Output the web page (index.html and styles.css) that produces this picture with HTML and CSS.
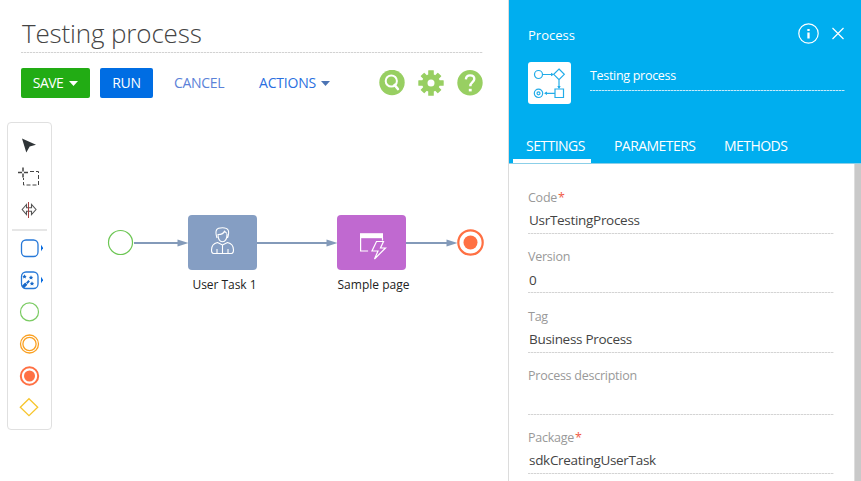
FILE: index.html
```
<!DOCTYPE html>
<html lang="en">
<head>
<meta charset="utf-8">
<title>Testing process</title>
<link rel="stylesheet" href="styles.css">
</head>
<body>
<div class="app">
  <main class="designer">
    <header class="designer-head">
      <h1 class="title">Testing process</h1>
      <div class="actions">
        <button class="btn btn-save"><span>SAVE</span><svg width="9" height="5" viewBox="0 0 9 5"><path d="M0 0h9L4.5 5z" fill="#fff"/></svg></button>
        <button class="btn btn-run"><span>RUN</span></button>
        <button class="btn btn-cancel"><span>CANCEL</span></button>
        <button class="btn btn-actions"><span>ACTIONS</span><svg width="9" height="5" viewBox="0 0 9 5"><path d="M0 0h9L4.5 5z" fill="#4c74b4"/></svg></button>
        <div class="tools">
          <svg width="26" height="26" viewBox="0 0 26 26"><circle cx="13" cy="12.500" r="12.700" fill="#98cf62"/><circle cx="12.300" cy="11" r="5.600" fill="none" stroke="#fff" stroke-width="2"/><path d="M15.600 15l3.300 4" stroke="#fff" stroke-width="2.600" stroke-linecap="round"/></svg>
          <svg width="26" height="26" viewBox="0 0 26 26"><g fill="#98cf62"><circle cx="13" cy="13" r="9"/><g id="teeth"><rect x="10.200" y=".3" width="5.600" height="25.400" rx=".5"/><rect x=".3" y="10.200" width="25.400" height="5.600" rx=".5"/></g><g transform="rotate(45 13 13)"><rect x="10.400" y=".8" width="5.200" height="24.400" rx=".5"/><rect x=".8" y="10.400" width="24.400" height="5.200" rx=".5"/></g></g><circle cx="13" cy="13" r="3.500" fill="#fff"/></svg>
          <svg width="26" height="26" viewBox="0 0 26 26"><circle cx="13" cy="12.800" r="12.700" fill="#98cf62"/><path d="M8.900 9.300c.2-2.600 1.900-3.900 4.200-3.900 2.500 0 4.200 1.400 4.200 3.600 0 3.200-4 3.200-4 7.200" fill="none" stroke="#fff" stroke-width="2.400"/><rect x="11.800" y="18.800" width="2.900" height="2.600" fill="#fff"/></svg>
        </div>
      </div>
    </header>
    <div class="workspace">
      <aside class="palette">
        <svg width="26" height="32" viewBox="0 0 26 32"><path d="M5 8.500l14 6.200-6.300 1.800-3.400 6z" fill="#2f3437"/></svg>
        <svg width="26" height="32" viewBox="0 0 26 32"><path d="M1 10.500h4m2 0h4M6 5.500v4m0 2v4" stroke="#444" stroke-width="1.500"/><path d="M13 9.500h8.500v13.500h-15V16" fill="none" stroke="#444" stroke-dasharray="4 2"/></svg>
        <svg width="26" height="32" viewBox="0 0 26 32"><path d="M9.500 10.500L5.200 15.500l4.300 5v-3.300h5v3.300l4.500-5-4.500-5v3.300h-5z" fill="none" stroke="#555" stroke-width="1.100"/><path d="M11.500 8v16" stroke="#a34040"/></svg>
        <i class="divider"></i>
        <svg width="26" height="32" viewBox="0 0 26 32"><rect x="4.500" y="8" width="16.500" height="16.500" rx="4.500" fill="none" stroke="#2678d8" stroke-width="1.300"/><path d="M24 12.800l2.200 3.200-2.200 3.200z" fill="#066be0"/></svg>
        <svg width="26" height="32" viewBox="0 0 26 32"><rect x="4.500" y="8" width="16.500" height="16.500" rx="4.500" fill="none" stroke="#2678d8" stroke-width="1.300"/><path d="M5.800 23.200l3.500-3.500" stroke="#1868c8" stroke-width="3.200"/><path d="M9.800 19.200L12.200 16.800" stroke="#1868c8" stroke-width="2"/><g fill="#1868c8"><path id="star" d="M7.500 10.200l.7 1.500 1.500.2-1.100 1.200.3 1.500-1.400-.8-1.400.8.3-1.500-1.100-1.200 1.500-.2z"/><use href="#star" x="6.500" y="1"/><use href="#star" x="7.500" y="7"/></g><path d="M24 12.800l2.200 3.200-2.200 3.200z" fill="#066be0"/></svg>
        <svg width="26" height="32" viewBox="0 0 26 32"><circle cx="12.500" cy="15.900" r="9" fill="#fff" stroke="#7bcb63" stroke-width="1.200"/></svg>
        <svg width="26" height="32" viewBox="0 0 26 32"><g fill="none" stroke="#faa021" stroke-width="1.300"><circle cx="12.500" cy="16" r="9"/><circle cx="12.500" cy="16" r="6.600"/></g></svg>
        <svg width="26" height="32" viewBox="0 0 26 32"><circle cx="12.500" cy="16" r="8.700" fill="#fff" stroke="#ff7043" stroke-width="2"/><circle cx="12.500" cy="16" r="5.500" fill="#ff7043"/></svg>
        <svg width="26" height="32" viewBox="0 0 26 32"><path d="M12 6.700l8.700 8.500-8.700 8.500-8.700-8.500z" fill="none" stroke="#f7c52d" stroke-width="1.300"/></svg>
      </aside>
      <svg class="diagram" width="400" height="100" viewBox="100 200 400 100">
        <g stroke="#839ab9" stroke-width="2"><path d="M134 243h44M257 243h70M406 243h41"/></g>
        <g fill="#839ab9"><path d="M177.500 239.500l11 3.500-11 3.500zM326.500 239.500l11 3.500-11 3.500zM446.500 239.500l11 3.500-11 3.500z"/></g>
        <circle cx="120.500" cy="242.500" r="12" fill="#fff" stroke="#6cc653" stroke-width="1.200"/>
        <rect x="188" y="215" width="69" height="55" rx="4" fill="#859ec3"/>
        <g fill="none" stroke="#fff" stroke-width="1.100" stroke-linejoin="round">
          <path d="M217 238c-2.500-8-.5-10.200 5.500-10.200s7.500 3.200 5 10.200M218 234.500c4 0 6-1.500 6.500-3.500 1 1.500 2 2 2.600 2.500M218 234c0 5 1.500 7.700 4.400 7.700s4.600-2.700 4.600-7.700"/>
          <path d="M217.500 242.500c-4.500 1-6 3-6 7.500 0 2.500.5 3.500 2 3.500h18c1.500 0 2-1 2-3.500 0-4.500-1.500-6.500-6-7.500l-5 2.500zM222.500 245v8.500M217 249v4.500M228 249v4.500"/>
        </g>
        <rect x="337" y="215" width="69" height="55" rx="4" fill="#c069d0"/>
        <path d="M360 233.200h23v5h-23z" fill="#fff"/>
        <path d="M360.600 238v13h7.500M382.500 238v2.500" fill="none" stroke="#fff" stroke-width="1.200"/>
        <path d="M376.500 241.500h7l-3 6.500h5l-11 11 3.500-8h-6z" fill="#c069d0" stroke="#fff" stroke-width="1.200"/>
        <circle cx="470.500" cy="242.500" r="12.200" fill="#fff" stroke="#ff7043" stroke-width="2.200"/>
        <circle cx="470.500" cy="242.500" r="7" fill="#ff7043"/>
        <text x="192.500" y="289" textLength="64" class="node-label">User Task 1</text>
        <text x="337.500" y="289" textLength="72" class="node-label">Sample page</text>
      </svg>
    </div>
  </main>
  <section class="panel">
    <header class="panel-head">
      <div class="panel-top">
        <span class="panel-type">Process</span>
        <svg width="46" height="22" viewBox="0 0 46 22" fill="none" stroke="#fff" stroke-width="1.200"><circle cx="10.500" cy="10.500" r="9.700"/><path d="M10.500 9.500v6M10.500 6v2" stroke-width="2.300"/><path d="M34.500 5l11 11M45.500 5l-11 11"/></svg>
      </div>
      <div class="panel-name">
        <div class="process-icon"><svg width="43" height="42" viewBox="0 0 43 42" fill="none" stroke="#22ace8" stroke-width="1.200"><circle cx="10.500" cy="12.500" r="4"/><path d="M15 12.500h10M31 7l5.300 5.300-5.300 5.300-5.300-5.300zM31 18v8M27 27h8.500v8.500H27zM27 31.300H17"/><circle cx="10.500" cy="31.300" r="4.200"/><circle cx="10.500" cy="31.300" r="1.500"/><path d="M23 10.800l3 1.700-3 1.700zM29.300 24l1.700 3 1.700-3zM19 29.600l-3 1.700 3 1.700z" fill="#22ace8" stroke="none"/></svg></div>
        <div class="process-name">Testing process</div>
      </div>
      <nav class="tabs"><span class="tab active">SETTINGS</span><span class="tab tab-params">PARAMETERS</span><span class="tab tab-methods">METHODS</span></nav>
    </header>
    <div class="panel-body">
      <form class="fields">
        <div class="field f-code"><label>Code<b>*</b></label><span class="value">UsrTestingProcess</span></div>
        <div class="field f-version"><label>Version</label><span class="value">0</span></div>
        <div class="field f-tag"><label>Tag</label><span class="value">Business Process</span></div>
        <div class="field f-desc"><label>Process description</label><span class="value"></span></div>
        <div class="field f-package"><label>Package<b>*</b></label><span class="value">sdkCreatingUserTask</span></div>
      </form>
      <div class="scrollbar"></div>
    </div>
  </section>
</div>
</body>
</html>
```
FILE: styles.css
```
* { box-sizing: border-box; }
body { margin: 0; background: #fff; font-family: "Open Sans", sans-serif; font-size: 13px; color: #444; }
svg { display: block; flex: none; }
.app { display: flex; width: 861px; height: 481px; overflow: hidden; }

.designer { width: 508px; flex: none; display: flex; flex-direction: column; }
.designer-head { height: 122px; padding: 15px 25px 0 21px; }
.title { margin: 0; height: 38px; line-height: 36px; font-size: 26px; font-weight: 300; padding-left: 1px; color: #444; letter-spacing: -0.15px;
  background: repeating-linear-gradient(90deg, #d2d2d2 0 2px, #f2f2f2 2px 3px) left bottom / 100% 1px no-repeat; }
.actions { display: flex; align-items: center; margin-top: 15px; height: 30px; }
.btn { height: 30px; border: 0; padding: 0; margin: 0; border-radius: 2px; background: none; font: 14px "Open Sans", sans-serif;
  display: flex; align-items: center; justify-content: center; white-space: nowrap; letter-spacing: -0.3px; }
.btn span { padding-bottom: 2px; }
.btn-save { width: 69px; background: #22ac14; color: #fff; gap: 6px; letter-spacing: -0.6px; }
.btn-run { width: 53px; margin-left: 10px; background: #006de3; color: #fff; }
.btn-cancel { width: 52px; margin-left: 21px; color: #5b82d8; justify-content: flex-start; }
.btn-actions { width: 73px; margin-left: 33px; gap: 5px; color: #2a6fe0; letter-spacing: -0.2px; justify-content: flex-start; }
.tools { display: flex; gap: 13px; margin-left: auto; }

.workspace { flex: 1; display: flex; align-items: flex-start; }
.palette { width: 45px; height: 308px; margin-left: 7px; padding: 7px 0 0 9px; border: 1px solid #e0e0e0; border-radius: 4px; flex: none; }
.divider { display: block; height: 2px; width: 35px; margin: 3px 0 1px -5px; background: #e6e6e6; }
.diagram { margin: 78px 0 0 48px; }
.node-label { font-size: 12px; fill: #222; }

.panel { flex: 1; border-left: 1px solid #dcdcdc; display: flex; flex-direction: column; }
.panel-head { height: 164px; background: #00aeef; color: #fff; border-bottom: 1px solid #8bcfe8; display: flex; flex-direction: column; }
.panel-top { height: 62px; padding: 23px 17px 0 19px; display: flex; justify-content: space-between; }
.panel-type { line-height: 24px; font-size: 13px; }
.panel-name { height: 42px; padding: 0 16px 0 19px; display: flex; gap: 19px; }
.process-icon { width: 43px; height: 42px; background: #fff; border-radius: 3px; }
.process-name { flex: 1; height: 29px; line-height: 27px; font-size: 12.5px; letter-spacing: -0.3px;
  background: repeating-linear-gradient(90deg, #c5ebfb 0 2px, #5fcaf5 2px 3px) left bottom / 100% 1px no-repeat; }
.tabs { flex: 1; display: flex; align-items: flex-end; padding-left: 4px; font-size: 14px; letter-spacing: -0.55px; }
.tab { height: 30px; line-height: 26px; border-bottom: 4px solid transparent; white-space: nowrap; }
.active { width: 78px; padding-left: 13px; border-color: #fff; }
.tab-params { margin-left: 23px; width: 80px; }
.tab-methods { margin-left: 30px; }

.panel-body { flex: 1; display: flex; justify-content: space-between; }
.fields { width: 306px; margin: 0 0 0 19px; display: flex; flex-direction: column; }
.field { display: flex; flex-direction: column; flex: none;
  background: repeating-linear-gradient(90deg, #d4d4d4 0 2px, #eee 2px 3px) left bottom / 100% 1px no-repeat; }
.field label { height: 18px; line-height: 19px; font-size: 12.5px; letter-spacing: -0.25px; color: #999; }
.field b { font-weight: 400; color: #f05a46; margin-left: 1px; }
.value { padding: 2px 0 0 1px; line-height: 25px; font-size: 13.5px; letter-spacing: -0.3px; color: #444; white-space: nowrap; }
.f-code { height: 70px; padding-top: 24px; }
.f-version { height: 59px; padding-top: 13px; }
.f-version .value { padding-top: 3px; }
.f-tag { height: 60px; padding-top: 14px; }
.f-desc { height: 62px; padding-top: 13px; }
.f-package { height: 59px; padding-top: 13px; }
.scrollbar { width: 7px; background: #c9c9c9; border-left: 1px solid #ddd; }
```
